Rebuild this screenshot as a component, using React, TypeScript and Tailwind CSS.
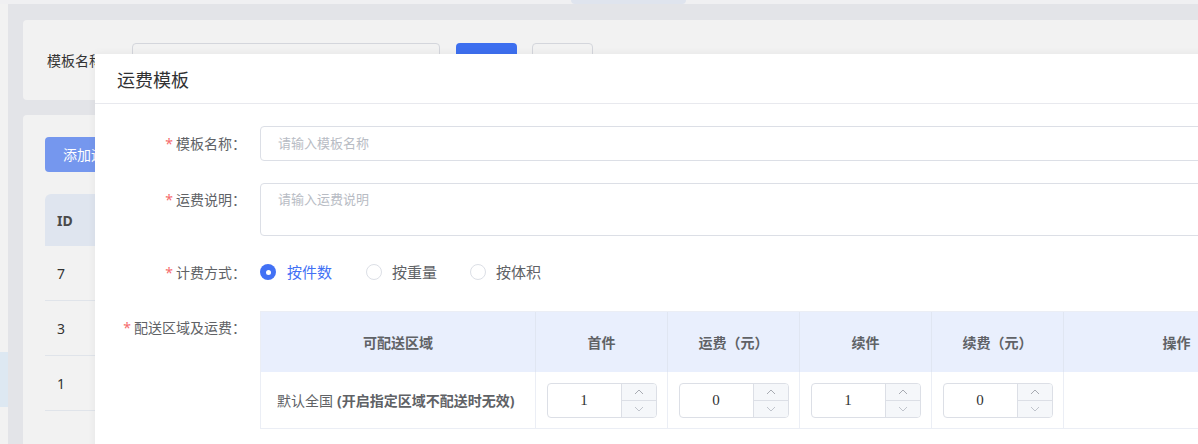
import React from "react";

const font = { fontFamily: '"Noto Sans", "Noto Sans CJK SC", sans-serif' };

function NumInput({ value }: { value: string }) {
  return (
    <div className="flex h-[35px] w-[110px] rounded-[4px] border border-[#dcdfe6] bg-white overflow-hidden">
      <div
        className="flex flex-1 items-center justify-center text-[15px] text-[#303133]"
        style={{ fontFamily: '"Liberation Serif", serif' }}
      >
        {value}
      </div>
      <div className="flex w-[35px] flex-col border-l border-[#dcdfe6] bg-[#f5f7fa]">
        <div className="flex flex-1 items-center justify-center border-b border-[#dcdfe6]">
          <svg width="10" height="6" viewBox="0 0 10 6" fill="none">
            <path d="M1 5 L5 1 L9 5" stroke="#a8abb2" strokeWidth="1" />
          </svg>
        </div>
        <div className="flex flex-1 items-center justify-center">
          <svg width="10" height="6" viewBox="0 0 10 6" fill="none">
            <path d="M1 1 L5 5 L9 1" stroke="#c0c4cc" strokeWidth="1" />
          </svg>
        </div>
      </div>
    </div>
  );
}

function Label({ text, top = false }: { text: string; top?: boolean }) {
  return (
    <div
      className={`w-[165px] shrink-0 pr-[14px] text-right text-[14px] text-[#606266] ${
        top ? "pt-[6px]" : ""
      }`}
    >
      <span className="mr-[3px] text-[#f56c6c]">*</span>
      {text}
    </div>
  );
}

export default function App() {
  return (
    <div className="relative h-[444px] w-[1198px] overflow-hidden bg-[#f2f2f2]" style={font}>
      {/* background page (dimmed) */}
      <div className="flex h-full flex-col">
        <div className="flex h-[4px] shrink-0 bg-[#f0f0f2]">
          <div className="ml-[571px] h-full w-[115px] rounded-b-[4px] bg-[#dfe4ee]" />
        </div>
        <div className="flex flex-1">
          <div className="flex w-[8px] shrink-0 flex-col bg-[#f2f2f2]">
            <div className="mt-[348px] h-[55px] bg-[#dde8f2]" />
          </div>
          <div className="flex flex-1 flex-col gap-[15px] bg-[#e3e4e8] pl-[15px] pt-[16px]">
            <div className="flex h-[80px] items-center rounded-l-[4px] bg-[#f2f2f2] pl-[24px]">
              <span className="w-[85px] text-[14px] text-[#333]">模板名称</span>
              <div className="h-[34px] w-[308px] rounded-[4px] border border-[#d4d6dc]" />
              <div className="ml-[16px] h-[34px] w-[61px] rounded-[4px] bg-[#3d6fef]" />
              <div className="ml-[15px] h-[34px] w-[61px] rounded-[4px] border border-[#d4d6dc]" />
            </div>
            <div className="flex flex-1 flex-col rounded-tl-[4px] bg-[#f2f2f2] pl-[22px] pt-[22px]">
              <div className="flex h-[35px] w-[120px] items-center rounded-[4px] bg-[#7597ee] pl-[18px] text-[14px] text-white">
                添加运费模板
              </div>
              <div className="mt-[22px] flex h-[52px] w-[100px] items-center rounded-tl-[6px] bg-[#dfe5ef] pl-[12px] text-[14px] font-bold text-[#4a4a4a]">
                ID
              </div>
              {["7", "3", "1"].map((v) => (
                <div
                  key={v}
                  className="flex h-[55px] w-[100px] items-center border-b border-[#e0e4ea] pl-[12px] text-[14px] text-[#333]"
                >
                  {v}
                </div>
              ))}
            </div>
          </div>
        </div>
      </div>

      {/* modal */}
      <div className="absolute left-[95px] top-[54px] h-[420px] w-[1150px] bg-white shadow-[0_0_8px_rgba(0,0,0,0.06)]">
        <div className="flex h-[50px] items-center border-b border-[#e8e9ee] pl-[22px] pt-[3px] text-[18px] text-[#303133]">
          运费模板
        </div>
        <div className="flex flex-col pt-[22px]">
          <div className="flex h-[35px] items-center">
            <Label text="模板名称：" />
            <div className="flex h-[35px] flex-1 items-center rounded-[4px] border border-[#dcdfe6] pl-[17px] text-[13px] text-[#b8bcc4]">
              请输入模板名称
            </div>
          </div>
          <div className="mt-[22px] flex items-start">
            <Label text="运费说明：" top />
            <div className="h-[53px] flex-1 rounded-[4px] border border-[#dcdfe6] pl-[17px] pt-[6px] text-[13px] text-[#b8bcc4]">
              请输入运费说明
            </div>
          </div>
          <div className="mt-[21px] flex h-[30px] items-center">
            <Label text="计费方式：" />
            <div className="flex items-center text-[15px]">
              <div className="flex h-[16px] w-[16px] items-center justify-center rounded-full bg-[#4271f5]">
                <div className="h-[5px] w-[5px] rounded-full bg-white" />
              </div>
              <span className="ml-[11px] text-[#4271f5]">按件数</span>
              <div className="ml-[34px] h-[16px] w-[16px] rounded-full border border-[#dcdfe6]" />
              <span className="ml-[10px] text-[#606266]">按重量</span>
              <div className="ml-[33px] h-[16px] w-[16px] rounded-full border border-[#dcdfe6]" />
              <span className="ml-[10px] text-[#606266]">按体积</span>
            </div>
          </div>
          <div className="mt-[24px] flex items-start">
            <Label text="配送区域及运费：" top />
            <div className="flex-1 border border-[#ebeef5]">
              <div className="flex h-[60px] bg-[#e9effd] text-[14px] font-bold text-[#606266]">
                <div className="flex w-[274px] items-center justify-center">可配送区域</div>
                <div className="flex w-[132px] items-center justify-center border-l border-[#e0e6f2]">首件</div>
                <div className="flex w-[132px] items-center justify-center border-l border-[#e0e6f2]">运费（元）</div>
                <div className="flex w-[132px] items-center justify-center border-l border-[#e0e6f2]">续件</div>
                <div className="flex w-[132px] items-center justify-center border-l border-[#e0e6f2]">续费（元）</div>
                <div className="flex w-[226px] items-center justify-center border-l border-[#e0e6f2]">操作</div>
              </div>
              <div className="flex h-[56px] text-[14px] text-[#606266]">
                <div className="flex w-[274px] items-center pl-[16px]">
                  默认全国<span className="ml-[4px] font-bold">(开启指定区域不配送时无效)</span>
                </div>
                {["1", "0", "1", "0"].map((v, i) => (
                  <div key={i} className="flex w-[132px] items-center justify-center border-l border-[#ebeef5]">
                    <NumInput value={v} />
                  </div>
                ))}
                <div className="w-[226px] border-l border-[#ebeef5]" />
              </div>
            </div>
          </div>
        </div>
      </div>
    </div>
  );
}
